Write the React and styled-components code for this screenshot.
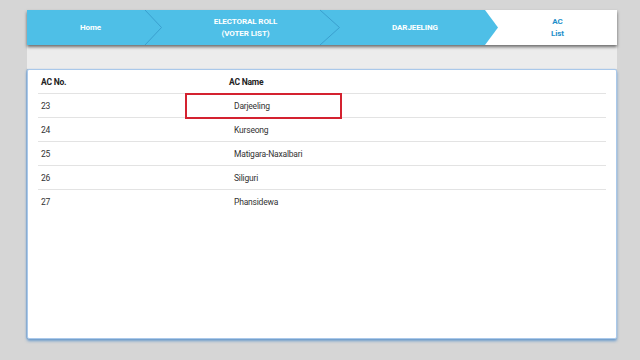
import React from "react";
import styled, { createGlobalStyle } from "styled-components";

const Global = createGlobalStyle`
  html, body { margin: 0; padding: 0; background: #d6d6d6; }
  body { font-family: Roboto, "Liberation Sans", Arial, sans-serif; }
`;

const Page = styled.div`
  width: 640px;
  height: 360px;
  padding: 10px 23px 0 27px;
  box-sizing: border-box;
  display: flex;
  flex-direction: column;
`;

const Bar = styled.nav`
  display: flex;
  height: 35px;
  background: #ffffff;
  box-shadow: 0 2px 3px rgba(0, 0, 0, 0.55);
  position: relative;
  z-index: 2;
`;

const Crumb = styled.div`
  position: relative;
  flex: 0 0 ${(p) => p.$w}px;
  display: flex;
  flex-direction: column;
  align-items: center;
  justify-content: center;
  padding-right: ${(p) => p.$pr || 0}px;
  box-sizing: border-box;
  background: ${(p) => (p.$active ? "#ffffff" : "#4ebfe7")};
  color: ${(p) => (p.$active ? "#1e8fca" : "#ffffff")};
  font-weight: 700;
  font-size: 8px;
  line-height: 12px;
  text-align: center;
  letter-spacing: -0.1px;
  clip-path: ${(p) =>
    p.$arrow
      ? "polygon(0 0, calc(100% - 13px) 0, 100% 50%, calc(100% - 13px) 100%, 0 100%)"
      : "none"};
  ${(p) => (p.$grow ? "flex: 1 1 auto;" : "")}
`;

const Chevron = styled.svg`
  position: absolute;
  top: 0;
  right: ${(p) => p.$right}px;
  width: ${(p) => p.$width}px;
  height: 35px;
  z-index: 3;
  overflow: visible;
`;

const Strip = styled.div`
  height: 24px;
  background: #ececec;
`;

const Card = styled.section`
  height: 270px;
  background: #ffffff;
  border: 1px solid #a9c8ea;
  border-radius: 2px;
  box-shadow: 0 2px 3px rgba(60, 130, 200, 0.7), -1px 0 1px rgba(60, 130, 200, 0.35);
  padding: 0 10px;
  box-sizing: border-box;
`;

const Table = styled.div`
  display: flex;
  flex-direction: column;
`;

const Row = styled.div`
  position: relative;
  display: grid;
  grid-template-columns: 191px 1fr;
  align-items: center;
  box-sizing: border-box;
  height: 24px;
  border-bottom: ${(p) => (p.$last ? "none" : "1px solid #e3e3e3")};
  font-size: 8.5px;
  color: ${(p) => (p.$head ? "#222" : "#333")};
  font-weight: ${(p) => (p.$head ? 700 : 400)};
  letter-spacing: -0.2px;
`;

const Cell = styled.div`
  padding-left: ${(p) => p.$pl ?? 3}px;
  position: relative;
  z-index: 1;
`;

const Highlight = styled.div`
  position: absolute;
  left: 147px;
  top: -1px;
  width: 157px;
  height: 26px;
  border: 2px solid #d42230;
  box-sizing: border-box;
`;

const rows = [
  ["23", "Darjeeling"],
  ["24", "Kurseong"],
  ["25", "Matigara-Naxalbari"],
  ["26", "Siliguri"],
  ["27", "Phansidewa"],
];

function Sep({ right, width }) {
  return (
    <Chevron $right={right} $width={width} viewBox={`0 0 ${width} 35`}>
      <polyline
        points={`0,0 ${width - 0.5},17.5 0,35`}
        fill="none"
        stroke="#3aa0cf"
        strokeWidth="1"
      />
    </Chevron>
  );
}

export default function App() {
  return (
    <>
      <Global />
      <Page>
        <Bar>
          <Crumb $w={127} style={{ zIndex: 3 }}>
            Home
            <Sep right={-8} width={17} />
          </Crumb>
          <Crumb $w={183} style={{ zIndex: 2 }}>
            <span>ELECTORAL ROLL</span>
            <span>(VOTER LIST)</span>
            <Sep right={-3} width={20} />
          </Crumb>
          <Crumb $w={161} $arrow $pr={5}>
            DARJEELING
          </Crumb>
          <Crumb $active $grow>
            <span>AC</span>
            <span>List</span>
          </Crumb>
        </Bar>
        <Strip />
        <Card>
          <Table>
            <Row $head>
              <Cell>AC No.</Cell>
              <Cell $pl={0}>AC Name</Cell>
            </Row>
            {rows.map(([no, name], i) => (
              <Row key={no} $last={i === rows.length - 1}>
                {i === 0 && <Highlight />}
                <Cell>{no}</Cell>
                <Cell $pl={5}>{name}</Cell>
              </Row>
            ))}
          </Table>
        </Card>
      </Page>
    </>
  );
}
